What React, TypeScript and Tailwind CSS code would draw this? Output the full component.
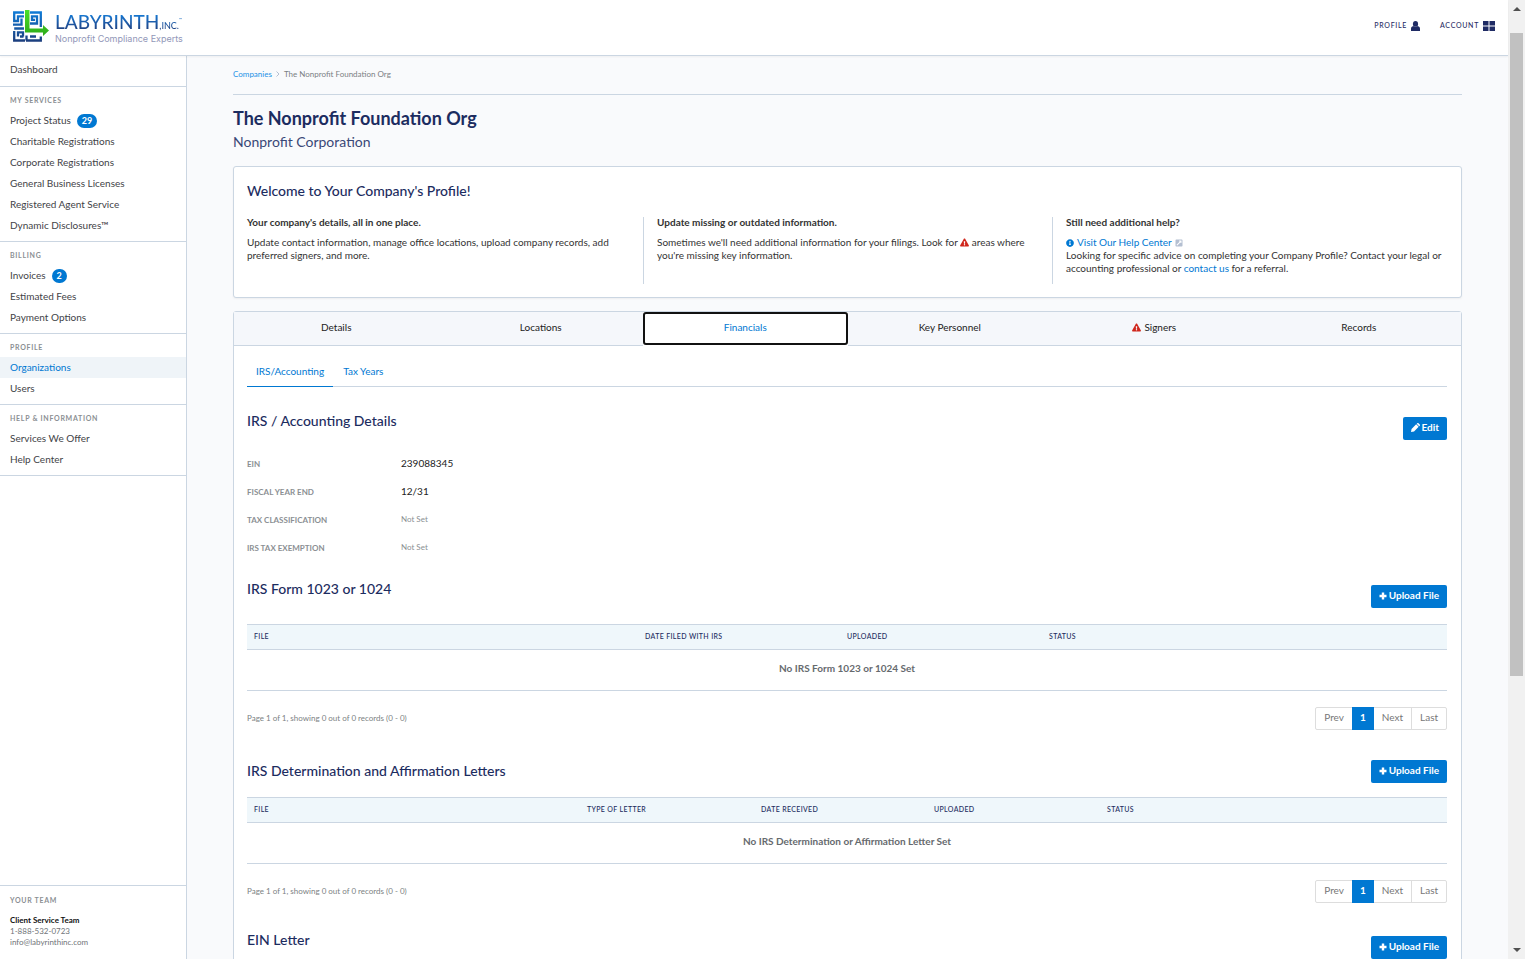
import { useState } from "react";
import type { ReactNode } from "react";
import { FaExclamationTriangle, FaExternalLinkSquareAlt, FaInfoCircle } from "react-icons/fa";

type NavItem = { label: string; badge?: number };
type NavGroup = { title: string; items: NavItem[] };
type Column = { label: string; width: string };

const NAV_GROUPS: NavGroup[] = [
  {
    title: "My Services",
    items: [
      { label: "Project Status", badge: 29 },
      { label: "Charitable Registrations" },
      { label: "Corporate Registrations" },
      { label: "General Business Licenses" },
      { label: "Registered Agent Service" },
      { label: "Dynamic Disclosures™" },
    ],
  },
  {
    title: "Billing",
    items: [{ label: "Invoices", badge: 2 }, { label: "Estimated Fees" }, { label: "Payment Options" }],
  },
  { title: "Profile", items: [{ label: "Organizations" }, { label: "Users" }] },
  { title: "Help & Information", items: [{ label: "Services We Offer" }, { label: "Help Center" }] },
];

const TABS = ["Details", "Locations", "Financials", "Key Personnel", "Signers", "Records"];

const DETAILS = [
  { label: "EIN", value: "239088345" },
  { label: "Fiscal Year End", value: "12/31" },
  { label: "Tax Classification", value: null },
  { label: "IRS Tax Exemption", value: null },
];

const FORM_COLUMNS: Column[] = [
  { label: "File", width: "w-[391px]" },
  { label: "Date Filed with IRS", width: "w-[202px]" },
  { label: "Uploaded", width: "w-[202px]" },
  { label: "Status", width: "w-[405px]" },
];

const LETTER_COLUMNS: Column[] = [
  { label: "File", width: "w-[333px]" },
  { label: "Type of Letter", width: "w-[174px]" },
  { label: "Date Received", width: "w-[173px]" },
  { label: "Uploaded", width: "w-[173px]" },
  { label: "Status", width: "w-[347px]" },
];

function LogoMark() {
  return (
    <svg viewBox="0 0 37 33" className="h-[33px] w-[37px]" fill="none" aria-hidden="true">
      <defs>
        <linearGradient id="maze" x1="0" y1="0" x2="0" y2="33" gradientUnits="userSpaceOnUse">
          <stop offset="0" stopColor="#0f7fdc" />
          <stop offset="1" stopColor="#1c3a78" />
        </linearGradient>
        <linearGradient id="arrow" x1="0" y1="0" x2="0" y2="24" gradientUnits="userSpaceOnUse">
          <stop offset="0" stopColor="#4be02a" />
          <stop offset="1" stopColor="#2fae1a" />
        </linearGradient>
      </defs>
      <g stroke="url(#maze)" strokeWidth="2.300">
        <path d="M12 2.500H2.200v8.500H6V6.300h6M9.500 8.500v6.200H1" />
        <path d="M18 2.500h10.800v14.500M18 13.500h7V6.300h-5v3.500h3" />
        <path d="M12 18.500H2.200M2.200 21v9.500H13M6 26.500v-4.200h5v4.200M8 26.500h3.500" />
        <path d="M14.500 25.500v5M18 26.500h6M14 30.500h14.800v-4" />
      </g>
      <path d="M13 0h4.500v18.500H31v-3.500l6 5.500-6 5.500v-3.500H13z" fill="url(#arrow)" />
    </svg>
  );
}

function Header() {
  return (
    <header className="z-10 flex h-14 shrink-0 items-center justify-between border-b border-[#cbd6e2] bg-white pr-[13px] pb-0.5 pl-3 shadow-xs">
      <a href="#home" className="flex items-start gap-1.5">
        <LogoMark />
        <span className="flex flex-col pt-[3px]">
          <span className="flex items-baseline bg-linear-to-b from-[#0f7fdc] to-[#1c2f68] bg-clip-text text-[19px] leading-[18px] font-medium text-transparent">
            LABYRINTH
            <span className="text-[9px]">,INC.</span>
            <span className="self-start text-[4px] leading-[14px]">™</span>
          </span>
          <span className="font-[Inter] text-[9px] leading-[8px] text-[#9297b8]">Nonprofit Compliance Experts</span>
        </span>
      </a>
      <nav className="flex items-center gap-5 pb-0.5 text-[7px] font-medium tracking-widest text-[#1f2b64] uppercase">
        <a href="#profile" className="flex items-center gap-1">
          Profile
          <svg viewBox="0 0 9 10" className="h-2.5 w-[9px]" fill="currentColor" aria-hidden="true">
            <ellipse cx="4.500" cy="2.900" rx="2.600" ry="2.900" />
            <path d="M0 10V8c0-1.600.8-2.500 2.300-2.900 1.200 1.300 3.200 1.300 4.400 0C8.200 5.500 9 6.400 9 8v2z" />
          </svg>
        </a>
        <a href="#account" className="flex items-center gap-1">
          Account
          <svg viewBox="0 0 12 10" className="h-2.5 w-3" fill="currentColor" aria-hidden="true">
            <path d="M0 0h5.500v4.500H0zM6.500 0H12v4.500H6.500zM0 5.500h5.500V10H0zM6.500 5.500H12V10H6.500z" />
          </svg>
        </a>
      </nav>
    </header>
  );
}

function Sidebar() {
  return (
    <aside className="flex w-[187px] shrink-0 flex-col border-r border-[#cbd6e2] bg-white text-[#3f4347]">
      <div className="border-b border-[#cbd6e2] pt-[3px] pb-1.5">
        <a href="#dashboard" className="flex h-[21px] items-center px-2.5">Dashboard</a>
      </div>
      {NAV_GROUPS.map((group) => (
        <div key={group.title} className="border-b border-[#cbd6e2] pb-[5px]">
          <h2 className="flex h-[23px] items-center px-2.5 pt-1 text-[7px] font-bold tracking-widest text-[#8b8f93] uppercase">
            {group.title}
          </h2>
          <ul>
            {group.items.map((item) => (
              <li key={item.label}>
                <a
                  href="#nav"
                  className={`flex h-[21px] items-center gap-1.5 px-2.5 ${item.label === "Organizations" ? "bg-[#eff4f8] text-[#0078d2]" : ""}`}
                >
                  {item.label}
                  {item.badge ? (
                    <span className="rounded-full bg-[#0078d2] px-[5px] text-[9px] leading-[14px] font-bold text-white">
                      {item.badge}
                    </span>
                  ) : null}
                </a>
              </li>
            ))}
          </ul>
        </div>
      ))}
      <div className="mt-auto border-t border-[#cbd6e2] px-2.5 pt-2 pb-[11px]">
        <h2 className="mb-2 text-[7px] leading-[13px] font-bold tracking-widest text-[#8b8f93] uppercase">Your Team</h2>
        <address className="text-[8px] leading-[11px] text-[#707478] not-italic">
          <strong className="block font-bold text-[#111111]">Client Service Team</strong>
          <a href="tel:1-888-532-0723" className="block">1-888-532-0723</a>
          <a href="mailto:info@labyrinthinc.com" className="block">info@labyrinthinc.com</a>
        </address>
      </div>
    </aside>
  );
}

function Heading({ children }: { children: ReactNode }) {
  return <h2 className="pb-0.5 text-sm leading-[15px] font-medium text-[#1c2c60]">{children}</h2>;
}

function WelcomeCard() {
  return (
    <section className="mb-[13px] rounded-[3px] border border-[#cbd6e2] bg-white pt-4 pb-[13px] shadow-xs">
      <div className="mb-[17px] px-[13px]">
        <Heading>Welcome to Your Company's Profile!</Heading>
      </div>
      <div className="grid min-h-[67px] grid-cols-3 leading-[13px]">
        <div className="px-[13px]">
          <h3 className="mb-2 leading-[11px] font-bold">Your company's details, all in one place.</h3>
          <p>Update contact information, manage office locations, upload company records, add preferred signers, and more.</p>
        </div>
        <div className="border-l border-[#cbd6e2] px-[13px]">
          <h3 className="mb-2 leading-[11px] font-bold">Update missing or outdated information.</h3>
          <p>
            Sometimes we'll need additional information for your filings. Look for{" "}
            <FaExclamationTriangle className="inline size-[9px] align-[-1px] text-[#d0271d]" /> areas where you're missing key
            information.
          </p>
        </div>
        <div className="border-l border-[#cbd6e2] px-[13px]">
          <h3 className="mb-2 leading-[11px] font-bold">Still need additional help?</h3>
          <a href="#help" className="flex items-center gap-[3px] text-[#0078d2]">
            <FaInfoCircle className="size-2" /> Visit Our Help Center
            <FaExternalLinkSquareAlt className="size-2 text-[#b4bfd1]" />
          </a>
          <p>
            Looking for specific advice on completing your Company Profile? Contact your legal or accounting professional or{" "}
            <a href="#contact" className="text-[#0078d2]">contact us</a> for a referral.
          </p>
        </div>
      </div>
    </section>
  );
}

function ActionButton({ children, className = "mt-1" }: { children: ReactNode; className?: string }) {
  return (
    <button
      type="button"
      className={`flex h-[23px] cursor-pointer items-center gap-0.5 rounded-xs bg-[#0078d2] px-2 pb-0.5 font-bold text-white ${className}`}
    >
      {children}
    </button>
  );
}

function PlusIcon() {
  return (
    <svg viewBox="0 0 8 8" className="size-2" stroke="currentColor" strokeWidth="2.400" aria-hidden="true">
      <path d="M4 .5v7M.5 4h7" />
    </svg>
  );
}

function PencilIcon() {
  return (
    <svg viewBox="0 0 8 8" className="size-[9px]" fill="currentColor" aria-hidden="true">
      <path d="M0 8l.5-2.700L4.600 1.200l2.200 2.200L2.700 7.500zM5.100.7 5.600.2c.3-.3.700-.3 1 0L7.800 1.400c.3.3.3.700 0 1l-.5.5z" />
    </svg>
  );
}

function RecordsTable({ columns, emptyText }: { columns: Column[]; emptyText: string }) {
  return (
    <>
      <table className="w-full table-fixed border-collapse">
        <thead>
          <tr className="h-[25px] border-y border-[#cbd6e2] bg-[#eff7fb] text-[7px] text-[#1c2c60] uppercase">
            {columns.map((column) => (
              <th key={column.label} scope="col" className={`px-[7px] pb-0.5 text-left font-medium tracking-wider ${column.width}`}>
                {column.label}
              </th>
            ))}
          </tr>
        </thead>
        <tbody>
          <tr className="h-[41px] border-b border-[#cbd6e2]">
            <td colSpan={columns.length} className="pb-1 text-center font-bold text-[#666a6e]">{emptyText}</td>
          </tr>
        </tbody>
      </table>
      <div className="mt-4 flex items-center justify-between">
        <p className="pb-0.5 text-[8px] text-[#7b7f83]">Page 1 of 1, showing 0 out of 0 records (0 - 0)</p>
        <nav className="flex h-[23px] rounded-xs border border-[#dddddd] text-[#777777]">
          <button type="button" className="px-2 pb-0.5">Prev</button>
          <button type="button" className="-my-px bg-[#0078d2] px-2 pb-0.5 font-bold text-white">1</button>
          <button type="button" className="px-2 pb-0.5">Next</button>
          <button type="button" className="border-l border-[#dddddd] px-2 pb-0.5">Last</button>
        </nav>
      </div>
    </>
  );
}

function Financials() {
  return (
    <div className="pr-3.5 pl-[13px]">
      <nav className="mt-[11px] flex border-b border-[#cbd6e2] text-[#0078d2]">
        <a href="#irs" className="-mb-px border-b border-[#0078d2] px-[9px] pt-1 pb-[5px] leading-5">IRS/Accounting</a>
        <a href="#years" className="px-2.5 pt-1 pb-[5px] leading-5">Tax Years</a>
      </nav>

      <div className="mt-[26px] flex items-start justify-between">
        <Heading>IRS / Accounting Details</Heading>
        <ActionButton>
          <PencilIcon /> Edit
        </ActionButton>
      </div>
      <dl className="mt-2.5">
        {DETAILS.map((detail) => (
          <div key={detail.label} className="flex h-7 items-center">
            <dt className="w-[154px] text-[8px] font-bold text-[#8b8f93] uppercase">{detail.label}</dt>
            <dd className={`pb-0.5 ${detail.value ? "text-[#222222]" : "text-[8px] text-[#8b8f93]"}`}>
              {detail.value ?? "Not Set"}
            </dd>
          </div>
        ))}
      </dl>

      <div className="mt-[19px] mb-4 flex items-start justify-between">
        <Heading>IRS Form 1023 or 1024</Heading>
        <ActionButton>
          <PlusIcon /> Upload File
        </ActionButton>
      </div>
      <RecordsTable columns={FORM_COLUMNS} emptyText="No IRS Form 1023 or 1024 Set" />

      <div className="mt-[30px] mb-3.5 flex items-center justify-between">
        <Heading>IRS Determination and Affirmation Letters</Heading>
        <ActionButton className="mt-0">
          <PlusIcon /> Upload File
        </ActionButton>
      </div>
      <RecordsTable columns={LETTER_COLUMNS} emptyText="No IRS Determination or Affirmation Letter Set" />

      <div className="mt-[29px] mb-4 flex items-start justify-between">
        <Heading>EIN Letter</Heading>
        <ActionButton>
          <PlusIcon /> Upload File
        </ActionButton>
      </div>
    </div>
  );
}

function ScrollRail() {
  return (
    <div className="flex w-[17px] shrink-0 flex-col items-center bg-[#f1f1f1] py-[7px]" aria-hidden="true">
      <span className="border-x-4 border-b-4 border-x-transparent border-b-[#505050]" />
      <span className="mt-[22px] h-[68%] w-[13px] bg-[#c1c1c1]" />
      <span className="mt-auto border-x-4 border-t-4 border-x-transparent border-t-[#505050]" />
    </div>
  );
}

export default function App() {
  const [activeTab, setActiveTab] = useState<string>("Financials");

  return (
    <div className="flex h-screen overflow-hidden bg-[#f9fafc] font-[Lato,sans-serif] text-[10px] text-[#333333]">
      <div className="flex min-w-0 grow flex-col">
        <Header />
        <div className="flex min-h-0 grow">
          <Sidebar />
          <main className="min-w-0 grow overflow-hidden px-[46px]">
            <nav className="flex h-[39px] items-center gap-1 border-b border-[#cbd6e2] pb-0.5 text-[8px] text-[#7b7f83]">
              <a href="#companies" className="text-[#2391e6]">Companies</a>
              <svg viewBox="0 0 4 6" className="h-1.5 w-1" fill="none" stroke="#b4bfd1" aria-hidden="true">
                <path d="M.5.500 3 3 .5 5.500" />
              </svg>
              <span>The Nonprofit Foundation Org</span>
            </nav>
            <h1 className="mt-[11px] text-lg leading-6 font-bold text-[#1c2c60]">The Nonprofit Foundation Org</h1>
            <p className="mt-[3px] mb-[15px] text-sm leading-[18px] text-[#3a4877]">Nonprofit Corporation</p>
            <WelcomeCard />

            <section className="rounded-[3px] border border-[#cbd6e2] bg-white pb-4">
              <div role="tablist" className="grid grid-cols-6 items-start">
                {TABS.map((tab) => (
                  <button
                    key={tab}
                    type="button"
                    role="tab"
                    aria-selected={activeTab === tab}
                    onClick={() => setActiveTab(tab)}
                    className={`flex cursor-pointer items-center justify-center gap-[3px] pb-0.5 ${
                      activeTab === tab
                        ? "h-[33px] rounded-[3px] bg-white text-[#0078d2] outline-2 -outline-offset-2 outline-[#111111]"
                        : "h-[34px] border-b border-[#cbd6e2] bg-[#f5f7fb] text-[#222222]"
                    }`}
                  >
                    {tab === "Signers" ? <FaExclamationTriangle className="size-[9px] text-[#d0271d]" /> : null}
                    {tab}
                  </button>
                ))}
              </div>
              <Financials />
            </section>
          </main>
        </div>
      </div>
      <ScrollRail />
    </div>
  );
}
